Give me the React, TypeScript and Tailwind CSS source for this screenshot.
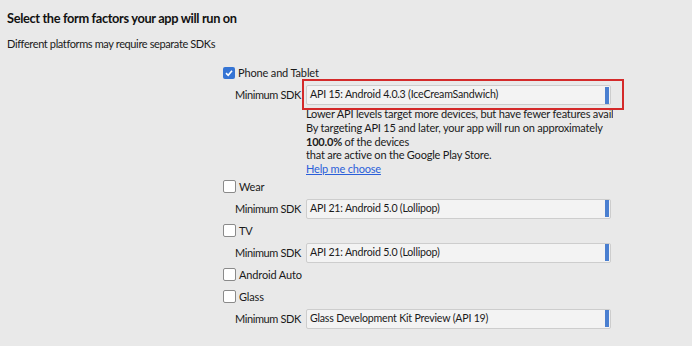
import React from "react";

const font = { fontFamily: 'Lato, "Noto Sans", sans-serif' };

function Check({ checked, label }: { checked?: boolean; label: string }) {
  return (
    <div className="flex h-[22px] items-center pl-[223px]">
      {checked ? (
        <div className="flex h-[12px] w-[12px] items-center justify-center rounded-[2px] bg-[#3574d4]">
          <svg width="10" height="10" viewBox="0 0 10 10">
            <path d="M2 5.2 L4.2 7.3 L8 2.8" stroke="white" strokeWidth="1.6" fill="none" />
          </svg>
        </div>
      ) : (
        <div className="h-[13px] w-[13px] rounded-[2px] border border-[#8a8a8a] bg-white" />
      )}
      <span className="ml-[3px] whitespace-nowrap text-[11px] tracking-[-0.15px] text-[#1a1a1a]">{label}</span>
    </div>
  );
}

function Sdk({ value, highlight }: { value: string; highlight?: boolean }) {
  return (
    <div className="flex h-[22px] items-center pl-[235px]">
      <span className="w-[71px] whitespace-nowrap text-[11px] tracking-[-0.4px] text-[#1a1a1a]">Minimum SDK</span>
      <div className="relative">
        <div className="flex h-[20px] w-[305px] items-center rounded-[2px] border border-[#cdcdcd] bg-[#f3f3f3] pl-[3px]">
          <span className="flex-1 whitespace-nowrap text-[10.6px] tracking-[-0.2px] text-[#1a1a1a]">{value}</span>
          <div className="mr-[1px] h-[17px] w-[4px] bg-[#4a7fd0]" />
        </div>
        {highlight && (
          <div className="absolute left-[-4px] top-[-6px] h-[31px] w-[322px] border-2 border-[#d42a2a]" />
        )}
      </div>
    </div>
  );
}

export default function App() {
  return (
    <div className="h-[346px] w-[692px] overflow-hidden bg-[#e9e9e9]" style={font}>
      <div className="pl-[7px] pt-[8px] text-[12.8px] font-bold leading-[20px] tracking-[-0.35px] text-[#111]">
        Select the form factors your app will run on
      </div>
      <div className="mt-[8px] pl-[7px] text-[11px] leading-[16px] tracking-[-0.38px] text-[#1a1a1a]">
        Different platforms may require separate SDKs
      </div>
      <div className="mt-[10px]">
        <Check checked label="Phone and Tablet" />
        <Sdk value="API 15: Android 4.0.3 (IceCreamSandwich)" highlight />
        <div className="ml-[306px] w-[307px] overflow-hidden whitespace-nowrap pt-[1px] text-[11px] leading-[13.8px] tracking-[-0.2px] text-[#1a1a1a]">
          <div>Lower API levels target more devices, but have fewer features available</div>
          <div>By targeting API 15 and later, your app will run on approximately</div>
          <div>
            <span className="font-bold">100.0%</span> of the devices
          </div>
          <div>that are active on the Google Play Store.</div>
          <div>
            <a className="text-[#2b5fd9] underline">Help me choose</a>
          </div>
        </div>
        <Check label="Wear" />
        <Sdk value="API 21: Android 5.0 (Lollipop)" />
        <Check label="TV" />
        <Sdk value="API 21: Android 5.0 (Lollipop)" />
        <Check label="Android Auto" />
        <Check label="Glass" />
        <Sdk value="Glass Development Kit Preview (API 19)" />
      </div>
    </div>
  );
}
